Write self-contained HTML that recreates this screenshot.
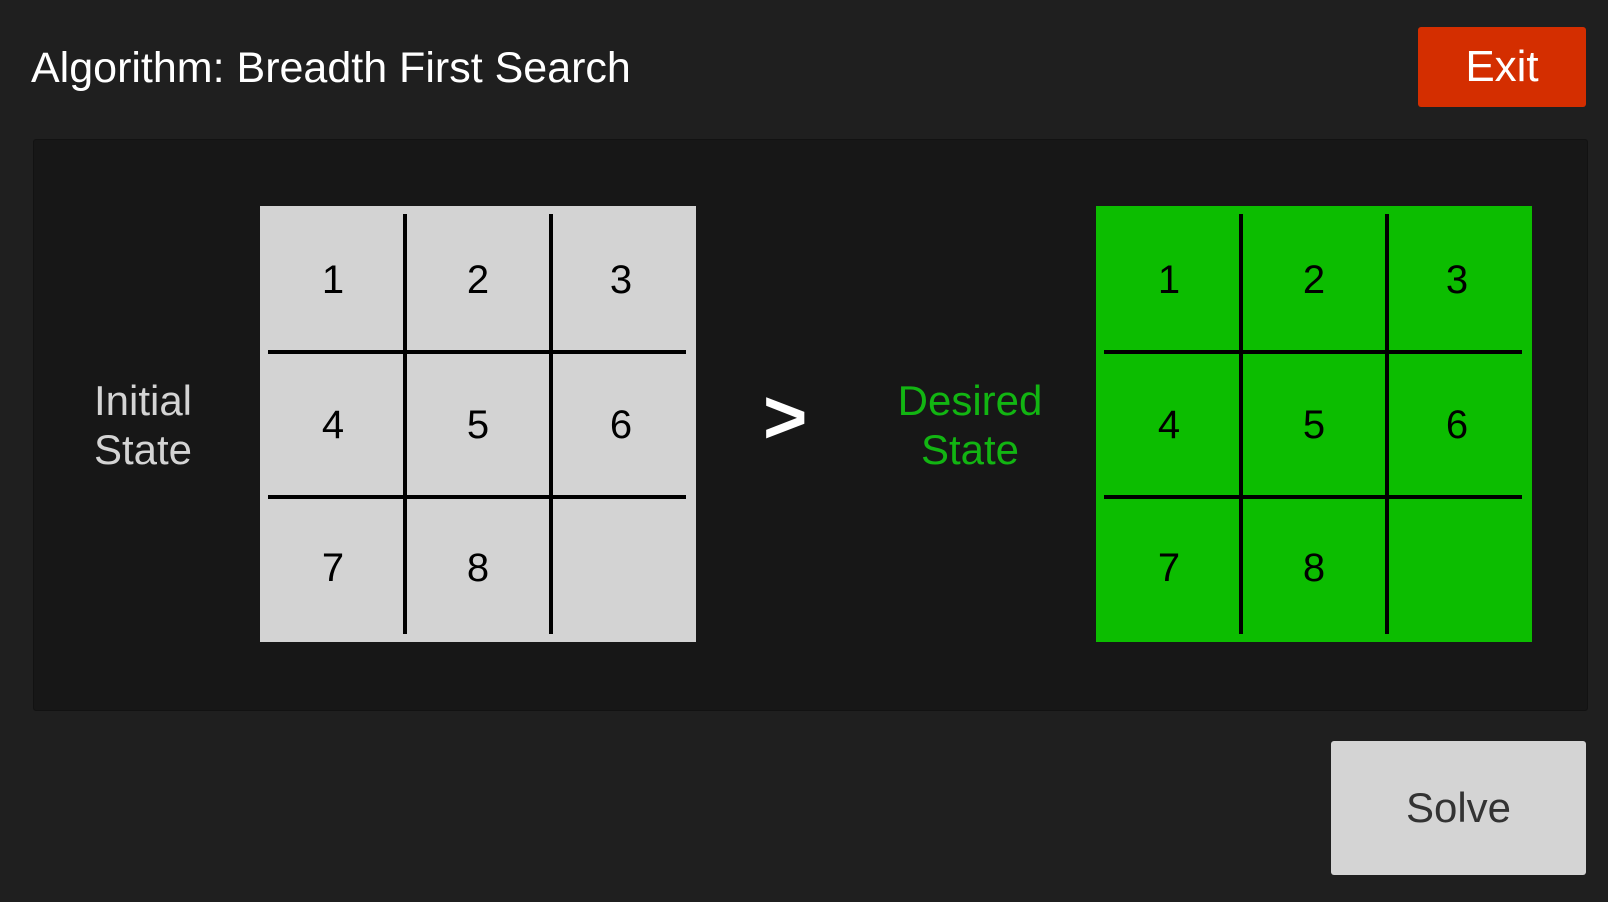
<!DOCTYPE html>
<html><head><style>
body{margin:0;width:1608px;height:902px;background:#1f1f1f;font-family:"Liberation Sans",Arial,sans-serif;position:relative;overflow:hidden}
.a{position:absolute}
.title{left:31px;top:40px;font-size:43px;color:#fff;line-height:56px}
.exit{left:1418px;top:27px;width:168px;height:80px;background:#d42e00;border-radius:3px;color:#fff;font-size:44px;text-align:center;line-height:80px}
.panel{left:33px;top:139px;width:1553px;height:570px;background:#171717;border:1px solid #121212;border-radius:3px}
.grid{top:206px;width:436px;height:436px}
.vl{width:4px;top:8px;height:420px;background:#000}
.hl{height:4px;left:8px;width:418px;background:#000}
.n{width:100px;text-align:center;font-size:40px;line-height:48px;color:#000}
.lbl{font-size:42px;line-height:49px;text-align:center;width:200px}
.solve{left:1331px;top:741px;width:255px;height:134px;background:#d4d4d4;border-radius:3px;color:#333;font-size:42px;text-align:center;line-height:134px}
</style></head><body>
<div class="a title">Algorithm: Breadth First Search</div>
<div class="a exit">Exit</div>
<div class="a panel"></div>
<div class="a lbl" style="left:43px;top:376px;color:#d4d4d4">Initial<br>State</div>
<div class="a" style="left:763px;top:378px;color:#fff;font-size:76px;line-height:80px;font-weight:bold">&gt;</div>
<div class="a lbl" style="left:870px;top:376px;color:#12b512">Desired<br>State</div>

<div class="a grid" style="left:260px;background:#d3d3d3">
<div class="a vl" style="left:143px"></div><div class="a vl" style="left:289px"></div>
<div class="a hl" style="top:144px"></div><div class="a hl" style="top:289px"></div>
<div class="a n" style="left:23px;top:50px">1</div><div class="a n" style="left:168px;top:50px">2</div><div class="a n" style="left:311px;top:50px">3</div>
<div class="a n" style="left:23px;top:195px">4</div><div class="a n" style="left:168px;top:195px">5</div><div class="a n" style="left:311px;top:195px">6</div>
<div class="a n" style="left:23px;top:338px">7</div><div class="a n" style="left:168px;top:338px">8</div>
</div>

<div class="a grid" style="left:1096px;background:#0cbd00">
<div class="a vl" style="left:143px"></div><div class="a vl" style="left:289px"></div>
<div class="a hl" style="top:144px"></div><div class="a hl" style="top:289px"></div>
<div class="a n" style="left:23px;top:50px">1</div><div class="a n" style="left:168px;top:50px">2</div><div class="a n" style="left:311px;top:50px">3</div>
<div class="a n" style="left:23px;top:195px">4</div><div class="a n" style="left:168px;top:195px">5</div><div class="a n" style="left:311px;top:195px">6</div>
<div class="a n" style="left:23px;top:338px">7</div><div class="a n" style="left:168px;top:338px">8</div>
</div>

<div class="a solve">Solve</div>
</body></html>
